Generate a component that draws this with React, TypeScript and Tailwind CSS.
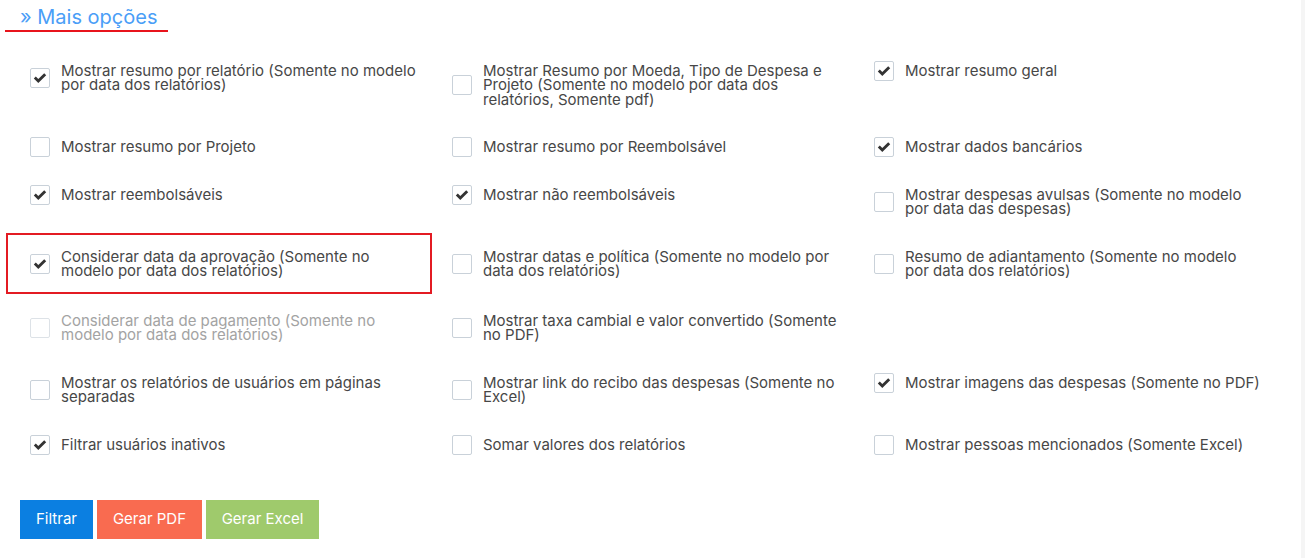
import React from "react";

type Item = { label: string; checked?: boolean; disabled?: boolean; highlight?: boolean } | null;

const rows: Item[][] = [
  [
    { label: "Mostrar resumo por relatório (Somente no modelo por data dos relatórios)", checked: true },
    { label: "Mostrar Resumo por Moeda, Tipo de Despesa e Projeto (Somente no modelo por data dos relatórios, Somente pdf)" },
    { label: "Mostrar resumo geral", checked: true },
  ],
  [
    { label: "Mostrar resumo por Projeto" },
    { label: "Mostrar resumo por Reembolsável" },
    { label: "Mostrar dados bancários", checked: true },
  ],
  [
    { label: "Mostrar reembolsáveis", checked: true },
    { label: "Mostrar não reembolsáveis", checked: true },
    { label: "Mostrar despesas avulsas (Somente no modelo por data das despesas)" },
  ],
  [
    { label: "Considerar data da aprovação (Somente no modelo por data dos relatórios)", checked: true, highlight: true },
    { label: "Mostrar datas e política (Somente no modelo por data dos relatórios)" },
    { label: "Resumo de adiantamento (Somente no modelo por data dos relatórios)" },
  ],
  [
    { label: "Considerar data de pagamento (Somente no modelo por data dos relatórios)", disabled: true },
    { label: "Mostrar taxa cambial e valor convertido (Somente no PDF)" },
    null,
  ],
  [
    { label: "Mostrar os relatórios de usuários em páginas separadas" },
    { label: "Mostrar link do recibo das despesas (Somente no Excel)" },
    { label: "Mostrar imagens das despesas (Somente no PDF)", checked: true },
  ],
  [
    { label: "Filtrar usuários inativos", checked: true },
    { label: "Somar valores dos relatórios" },
    { label: "Mostrar pessoas mencionados (Somente Excel)" },
  ],
];

function Check() {
  return (
    <svg width="14" height="12" viewBox="0 0 14 12" aria-hidden="true">
      <path d="M0.8 6.6 L2.8 4.6 L5.3 7.1 L11.2 1.2 L13.2 3.2 L5.3 11.1 Z" fill="#333333" />
    </svg>
  );
}

function Cell({ item }: { item: Item }) {
  if (!item) return <div />;
  const base = "flex items-center gap-[11px] pl-[22px]";
  const cls = item.highlight
    ? `${base} mt-[2px] mb-[5.5px] pt-[14.5px] pb-[13px] outline-2 outline-[#e31b23]`
    : `${base} py-[16.5px]`;
  return (
    <div className={cls}>
      <span
        className={`-my-[3px] flex h-[20px] w-[20px] shrink-0 items-center justify-center rounded-[2px] border ${
          item.disabled ? "border-[#dde2e7]" : "border-[#c9d1d9]"
        } bg-white`}
      >
        {item.checked ? <Check /> : null}
      </span>
      <span
        className={`w-[357px] text-[15px] leading-[14.5px] ${
          item.disabled ? "text-[#a3a3a3]" : "text-[#474747]"
        }`}
      >
        {item.label}
      </span>
    </div>
  );
}

export default function App() {
  return (
    <div className="flex h-[558px] w-full bg-white" style={{ fontFamily: "Inter, 'Noto Sans', sans-serif" }}>
      <div className="flex-1">
        <div className="ml-[5px] w-[163px] border-b-[2px] border-[#e8141c] pl-[15px] pt-[5px] text-[20px] leading-[25px] text-[#4a9ef7]">
          » Mais opções
        </div>
        <div className="mt-[15px] grid grid-cols-[422px_422px_422px] items-start pl-[8px]">
          {rows.map((r, i) => (
            <React.Fragment key={i}>
              {r.map((it, j) => (
                <Cell key={j} item={it} />
              ))}
            </React.Fragment>
          ))}
        </div>
        <div className="mt-[31px] flex gap-[4px] pl-[20px]">
          <button className="h-[39px] w-[73px] bg-[#0b7fe1] text-[15px] text-white">Filtrar</button>
          <button className="h-[39px] w-[105px] bg-[#f96b50] text-[15px] text-white">Gerar PDF</button>
          <button className="h-[39px] w-[113px] bg-[#9fca6c] text-[15px] text-white">Gerar Excel</button>
        </div>
      </div>
      <div className="w-[4px] bg-[#f5f5f5]" />
    </div>
  );
}
